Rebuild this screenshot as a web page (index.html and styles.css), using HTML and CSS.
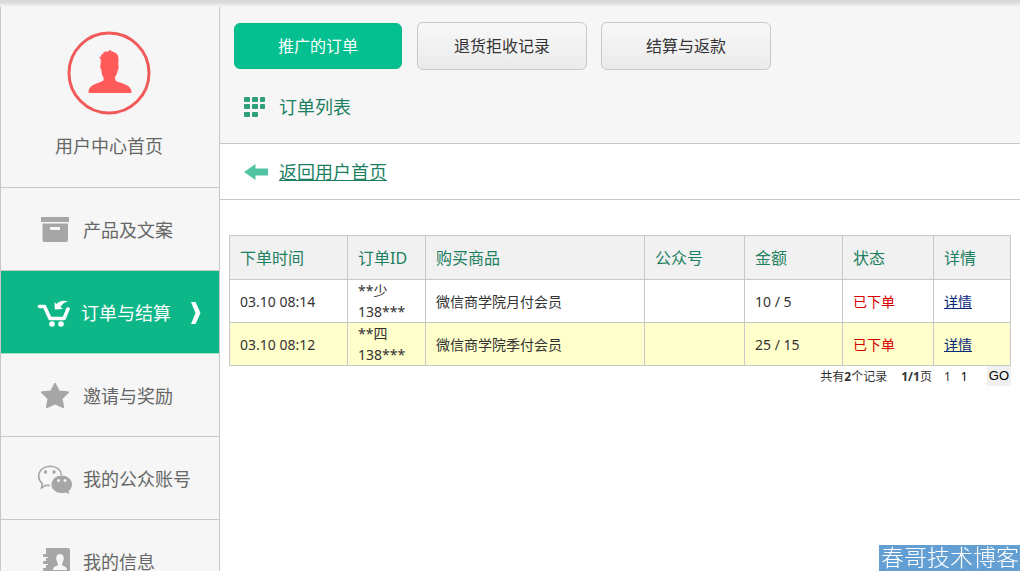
FILE: index.html
```html
<!DOCTYPE html>
<html lang="zh-CN">
<head>
<meta charset="utf-8">
<title>订单列表</title>
<link rel="stylesheet" href="styles.css">
</head>
<body>
<div class="layout">
  <nav class="sidebar">
    <a class="profile" href="#home">
      <svg class="avatar" viewBox="0 0 84 84" aria-hidden="true">
        <circle cx="42" cy="42" r="40" fill="none" stroke="#f05a5a" stroke-width="3"/>
        <path fill="#ff5b5b" d="M36.500 46.500C35 44 34.500 42 34.300 38.500C33 37.500 33 35 33.600 33.500L33.800 29L32.300 25.500L34.500 25.800L34 23.500L36.500 23L36.300 21L39.500 20.500L41.300 20.600L43 18.500L44.200 20.200C49 21 51.500 23.500 51.500 28L51.300 33.500C52 35.500 51.800 38 50.800 39C50.300 42 49.300 44.500 48 46C48 49 48.500 50 50 50.600C57 53 64.500 55 64.500 61C64.500 61.800 64 62 63 62H23C22 62 21.500 61.800 21.500 61C21.500 55 28.500 53 34.500 50.600C36.500 50 37 49 36.500 46.500Z"/>
      </svg>
      <span>用户中心首页</span>
    </a>
    <a class="item" href="#products">
      <svg class="icon" viewBox="0 0 36 32" aria-hidden="true" fill="#a6a6a6">
        <path d="M4 3H32V8H4Z"/>
        <path fill-rule="evenodd" d="M5.500 9.500H31V26Q31 28 29 28H7.500Q5.500 28 5.500 26ZM13 13V16H23V13Z"/>
      </svg>
      <span>产品及文案</span>
    </a>
    <a class="item active" href="#orders" aria-current="page">
      <svg class="icon" viewBox="0 0 36 32" aria-hidden="true" fill="none" stroke="#fff">
        <path d="M2.500 9.500H7.500L13 21.500H27L31 12" stroke-width="3.600" stroke-linecap="round" stroke-linejoin="round"/>
        <circle cx="15" cy="27" r="2.800" fill="#fff" stroke="none"/>
        <circle cx="24" cy="27" r="2.800" fill="#fff" stroke="none"/>
        <path fill="#fff" stroke="none" d="M17.500 5L19.500 7C23 3.500 27 3 31 4.500C27.500 5 25.500 7 23.500 10L26 12L17.800 12.500Z"/>
      </svg>
      <span>订单与结算</span>
      <svg class="chevron" viewBox="0 0 10 22" aria-hidden="true"><path fill="#fff" d="M0 0H4.500L9.500 11L4.500 22H0L4.500 11Z"/></svg>
    </a>
    <a class="item" href="#rewards">
      <svg class="icon" viewBox="0 0 36 32" aria-hidden="true"><path fill="#a6a6a6" stroke="#a6a6a6" stroke-linejoin="round" stroke-width="2" d="M18 4L21.800 11.500L31 12.300L24.500 18.500L26.200 27L18 23.300L10 27L11.500 18.500L5 12.300L14.200 11.500Z"/></svg>
      <span>邀请与奖励</span>
    </a>
    <a class="item" href="#accounts">
      <svg class="icon" viewBox="0 0 36 32" aria-hidden="true">
        <path fill="none" stroke="#a6a6a6" stroke-width="1.600" d="M13 22.500L8.500 22.200L4.500 25L5.300 20.500C-1 15 1 4 13 3.200C19.500 3.200 24 7 24.500 12"/>
        <circle cx="8.500" cy="9" r="1.700" fill="#a6a6a6"/><circle cx="17" cy="9" r="1.700" fill="#a6a6a6"/>
        <path fill="#a6a6a6" fill-rule="evenodd" d="M24.500 12.500C30.500 12.500 35 16.500 35 21.500C35 24.200 33.500 26.500 31.500 27.900L32.300 31L28.500 29.500C21 31.500 14.500 27.500 14.500 21.500C14.500 16.500 19 12.500 24.500 12.500ZM21.500 16A1.500 1.500 0 1 0 21.500 19A1.500 1.500 0 1 0 21.500 16M28 16A1.500 1.500 0 1 0 28 19A1.500 1.500 0 1 0 28 16Z"/>
      </svg>
      <span>我的公众账号</span>
    </a>
    <a class="item" href="#info">
      <svg class="icon" viewBox="0 0 36 32" aria-hidden="true">
        <path fill="#a6a6a6" d="M9 2H31Q33 2 33 4V28Q33 30 31 30H9V26H11V24H9V19H11V17H9V12H11V10H9Z"/>
        <g fill="#a6a6a6"><rect x="6" y="8" width="6" height="3" rx="1"/><rect x="6" y="15" width="6" height="3" rx="1"/><rect x="6" y="22" width="6" height="3" rx="1"/></g>
        <path fill="#f6f6f6" d="M23 8C26 8 27.500 11 26.500 14C26 16 25 17 25 19C27 20.500 30 20.500 30 24H16C16 20.500 19 20.500 21 19C21 17 20 16 19.500 14C18.500 11 20 8 23 8Z"/>
      </svg>
      <span>我的信息</span>
    </a>
  </nav>
  <main class="main">
    <header class="head">
      <div class="tabs">
        <button class="tab selected" type="button">推广的订单</button>
        <button class="tab" type="button">退货拒收记录</button>
        <button class="tab" type="button">结算与返款</button>
      </div>
      <h1 class="title">
        <svg class="mark" viewBox="0 0 25 22" aria-hidden="true" fill="#2c9f7c">
          <rect x="0" y="1" width="6" height="5" rx="1"/><rect x="8" y="1" width="6" height="5" rx="1"/><rect x="16" y="1" width="5" height="5" rx="1"/>
          <rect x="0" y="8" width="6" height="5" rx="1"/><rect x="8" y="8" width="6" height="5" rx="1"/><rect x="16" y="8" width="5" height="5" rx="1"/>
          <rect x="0" y="16" width="6" height="5" rx="1"/><rect x="8" y="16" width="6" height="5" rx="1"/>
        </svg>
        订单列表
      </h1>
    </header>
    <div class="back">
      <svg class="mark" viewBox="0 0 25 22" aria-hidden="true"><path fill="#52c4a4" d="M0 11L11.500 3V7.500H24V14.500H11.500V19Z"/></svg>
      <a href="#home">返回用户首页</a>
    </div>
    <section class="orders">
      <table>
        <colgroup><col class="c-time"><col class="c-id"><col><col class="c-account"><col class="c-sum"><col class="c-state"><col class="c-detail"></colgroup>
        <thead>
          <tr><th>下单时间</th><th>订单ID</th><th>购买商品</th><th>公众号</th><th>金额</th><th>状态</th><th>详情</th></tr>
        </thead>
        <tbody>
          <tr><td>03.10 08:14</td><td>**少<br>138***</td><td>微信商学院月付会员</td><td></td><td>10 / 5</td><td class="state">已下单</td><td><a href="#order-1">详情</a></td></tr>
          <tr><td>03.10 08:12</td><td>**四<br>138***</td><td>微信商学院季付会员</td><td></td><td>25 / 15</td><td class="state">已下单</td><td><a href="#order-2">详情</a></td></tr>
        </tbody>
      </table>
      <form class="pager">
        <span class="total">共有<b>2</b>个记录</span>
        <span class="pages"><b>1/1</b>页</span>
        <span class="current">1</span>
        <input type="text" value="1" aria-label="页码">
        <button type="button">GO</button>
      </form>
    </section>
  </main>
</div>
<div class="watermark">春哥技术博客</div>
</body>
</html>
```
FILE: styles.css
```css
* { box-sizing: border-box; }
html { scrollbar-width: none; }
body {
  margin: 0;
  background: #fff;
  color: #333;
  font: 14px/21px "Noto Sans", "Noto Sans CJK SC", sans-serif;
}
body::before {
  content: "";
  position: absolute;
  top: 0;
  left: 0;
  right: 0;
  height: 7px;
  background: linear-gradient(#d8d8d8, #dddddd 40%, #f6f6f6);
}
svg { display: block; flex: none; }
.layout { display: flex; min-height: 100vh; }

.sidebar {
  flex: none;
  width: 220px;
  background: #f6f6f6;
  border: solid #c8c8c8;
  border-width: 0 1px;
}
.sidebar a {
  display: flex;
  color: #666;
  font-size: 18px;
  line-height: 26px;
  text-decoration: none;
  border-bottom: 1px solid #c8c8c8;
}
.sidebar .profile {
  flex-direction: column;
  align-items: center;
  gap: 18px;
  height: 188px;
  padding: 31px 2px 0 0;
}
.avatar { width: 84px; height: 84px; }
.sidebar .item {
  align-items: center;
  gap: 10px;
  height: 83px;
  padding: 2px 0 0 36px;
}
.icon { width: 36px; height: 32px; }
.sidebar .active {
  gap: 8px;
  padding-right: 18px;
  background: #0db787;
  border-color: #a5dfcd;
  color: #fff;
}
.chevron { width: 10px; height: 22px; margin-left: auto; }

.main { flex: 1; min-width: 0; }
.head {
  padding: 22px 14px 23px;
  background: #f6f6f6;
  border-bottom: 1px solid #c8c8c8;
}
.tabs { display: flex; gap: 14px; }
.tab {
  width: 170px;
  height: 48px;
  padding: 0;
  border: 1px solid #c8c8c8;
  border-radius: 6px;
  background: linear-gradient(#f8f8f9, #ebebec);
  color: #333;
  font: inherit;
  font-size: 16px;
}
.selected {
  width: 168px;
  height: 46px;
  margin: 1px 1px 0 0;
  border-color: #0db787;
  background: #04bf8f;
  color: #fff;
}
.title, .back {
  display: flex;
  align-items: center;
  gap: 10px;
  margin: 0;
  color: #1c7f5f;
  font-size: 18px;
  font-weight: 400;
  line-height: 26px;
}
.title { padding: 24px 10px 0; }
.mark { width: 25px; height: 22px; }
.back { height: 56px; padding: 0 24px; border-bottom: 1px solid #c8c8c8; }
.back a { color: inherit; }

.orders { padding: 35px 9px; }
table { width: 100%; table-layout: fixed; border-collapse: collapse; }
.c-time { width: 118px; }
.c-id { width: 78px; }
.c-account { width: 100px; }
.c-sum { width: 98px; }
.c-state { width: 91px; }
.c-detail { width: 77px; }
th, td { padding: 0 10px; border: 1px solid #c8c8c8; text-align: left; }
th {
  height: 44px;
  padding-top: 2px;
  background: #f1f1f1;
  color: #1c7f5f;
  font-size: 16px;
  font-weight: 400;
}
tbody tr:nth-child(even) { background: #ffffcc; }
.state { color: #d90000; }
td a { color: #0a2a7a; }

.pager {
  display: flex;
  justify-content: flex-end;
  align-items: center;
  height: 20px;
  font-size: 12px;
}
.pages { margin-left: 14px; }
.current { margin-left: 12px; }
.pager input {
  width: 26px;
  margin-left: 10px;
  padding: 0;
  border: 0;
  background: none;
  color: #000;
  font: inherit;
}
.pager button {
  padding: 0 2px;
  border: 0;
  background: #f0f0f0;
  color: #000;
  font: 13px/20px "Liberation Sans", sans-serif;
}
.watermark {
  position: fixed;
  right: 0;
  bottom: 0;
  padding: 0 1px 2px 2px;
  background: #649fd3;
  color: #fff;
  font-size: 23px;
  font-weight: 300;
  line-height: 24px;
}
```
